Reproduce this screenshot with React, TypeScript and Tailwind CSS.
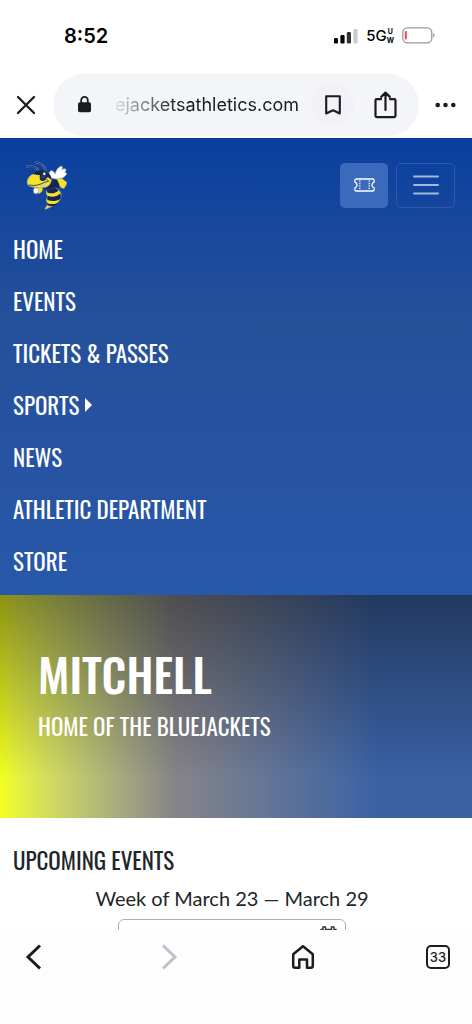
const display = "font-['Oswald','Roboto_Condensed','Roboto',sans-serif]";

const links = ['Home', 'Events', 'Tickets & Passes', 'Sports', 'News', 'Athletic Department', 'Store'];

function StatusBar() {
  return (
    <div className="flex h-[71px] shrink-0 items-center justify-between pr-9 pl-16 font-['Inter',sans-serif] text-black">
      <span className="text-[20px] leading-6 font-semibold">8:52</span>
      <div className="flex items-center gap-2">
        <svg width="24" height="16" viewBox="0 0 24 16" aria-label="Signal">
          <rect x="0" y="10" width="4" height="5.5" rx="1.3" />
          <rect x="6.4" y="7" width="4.2" height="8.5" rx="1.3" />
          <rect x="12.8" y="4" width="4.2" height="11.5" rx="1.3" fill="#333" />
          <rect x="19.4" y="1" width="4.2" height="14.5" rx="1.3" fill="#ccc" />
        </svg>
        <span className="flex items-center font-medium">
          <span className="text-[15px] leading-5">5G</span>
          <span className="flex flex-col text-center text-[7px] leading-[9px] font-bold">
            <span>U</span>
            <span>W</span>
          </span>
        </span>
        <svg width="34" height="17" viewBox="0 0 34 17" fill="none" aria-label="Battery low">
          <rect x="0.8" y="0.8" width="29" height="15" rx="4.6" stroke="#999" strokeWidth="1.3" />
          <path d="M31.3 6v4.6c1.6-.8 1.6-3.8 0-4.6Z" fill="#888" />
          <rect x="2.8" y="4" width="2" height="8.6" rx="0.8" fill="#f0444c" />
        </svg>
      </div>
    </div>
  );
}

function BrowserBar() {
  return (
    <div className="flex h-[67px] shrink-0 items-center text-[#1b1c1f]">
      <button aria-label="Close" className="flex w-[53px] justify-center pr-0.5">
        <svg width="20" height="20" viewBox="0 0 20 20" fill="none" stroke="currentColor" strokeWidth="2.3" strokeLinecap="round">
          <path d="M2 2l16 16M18 2L2 18" />
        </svg>
      </button>
      <div className="flex h-[62px] min-w-0 flex-1 items-center rounded-full bg-[#f4f5f8] pr-[22px] pl-[25px]">
        <svg width="13" height="17" viewBox="0 0 13 17" fill="none" className="shrink-0" aria-label="Secure">
          <rect x="0" y="6.2" width="13" height="10" rx="1.8" fill="currentColor" />
          <path d="M3.2 7V4.2a3.3 3.3 0 0 1 6.6 0V7" stroke="currentColor" strokeWidth="1.8" />
        </svg>
        <span className="min-w-0 flex-1 bg-linear-to-r from-[#e6e7ea] from-10% to-[#1b1c1f] to-40% bg-clip-text pr-3 text-right font-['Inter',sans-serif] text-[18px] leading-7 text-transparent">
          ejacketsathletics.com
        </span>
        <button aria-label="Bookmark" className="flex size-[43px] shrink-0 items-center justify-center rounded-full bg-[#f2f1f8]">
          <svg width="16" height="20" viewBox="0 0 16 20" fill="none" stroke="currentColor" strokeWidth="2.1" strokeLinejoin="round">
            <path d="M1.2 1.2h13.6v17.3L8 15.3l-6.800 3.200Z" />
          </svg>
        </button>
        <button aria-label="Share" className="ml-5 flex shrink-0">
          <svg width="23" height="28" viewBox="0 0 23 28" fill="none" stroke="currentColor" strokeWidth="2.2" strokeLinecap="round" strokeLinejoin="round">
            <path d="M7 8.2H2.8a1.3 1.3 0 0 0-1.3 1.3v15.3a1.3 1.3 0 0 0 1.3 1.3h17.4a1.3 1.3 0 0 0 1.3-1.3V9.5a1.3 1.3 0 0 0-1.3-1.3H16M11.5 19V1.8M7.2 5.900l4.3-4.3 4.3 4.3" />
          </svg>
        </button>
      </div>
      <button aria-label="More" className="flex w-[53px] justify-center">
        <svg width="21" height="6" viewBox="0 0 21 6" fill="currentColor">
          <circle cx="2.7" cy="3" r="2.3" />
          <circle cx="10.5" cy="3" r="2.3" />
          <circle cx="18.3" cy="3" r="2.3" />
        </svg>
      </button>
    </div>
  );
}

function Hornet() {
  return (
    <svg width="45" height="50" viewBox="0 0 45 50" strokeLinejoin="round" aria-label="Mitchell Bluejackets">
      <g fill="none" stroke="#6f86bd" strokeWidth="2" strokeLinecap="round">
        <path d="M2 6.500c4-1.500 9 .5 12.500 5" />
        <path d="M11 2.500c4 0 7.500 2.500 9.500 7" />
      </g>
      <g fill="none" stroke="#172650" strokeWidth="1" strokeLinecap="round">
        <path d="M2 6.500c4-1.500 9 .5 12.500 5" />
        <path d="M11 2.500c4 0 7.500 2.500 9.500 7" />
      </g>
      <path d="M26 18c-2-2-2.500-5.500-.8-6.800 2-1.200 3.800.4 5 2.800.6-3 2.800-7 5.800-7.800 2-.2 1.600 1.800.8 3.300 2-1 4.200-1 4.200.6 0 1-.8 1.700-1.300 2.300 1.800-.2 2.500 1.200 1.300 2.700-2.200 2.600-5 4.200-8.500 4.200Z" fill="#fff" stroke="#a7adba" strokeWidth="0.600" />
      <path d="M31 20l5-2.200 3 2.200 3 2.500-1 3-2 3-3-.8-2-3.200-3-1.500Z" fill="#f5e22a" stroke="#8c9096" strokeWidth="0.600" />
      <path d="M21 23l5-3.500 6 .3 2.200 4.200-1 4-8 4-4-3-6 .5-1-3Z" fill="#172650" />
      <path d="M21.500 30.500l9.500-2.500c3.500 2 5.300 4.800 5 8-.4 4.500-4 7.800-8 9.800l-7.300 3.400c-.8.200-.8-.5-.3-1.200 1.600-2 2.300-3.800 2.300-5-1.700-1.500-1.700-4.500.3-6.500-1.500-1.500-2-4-1.500-6Z" fill="#f5e22a" stroke="#9ba2ac" strokeWidth="0.900" />
      <path d="M21.500 30l9-2.300 3 2.500c-2.500 3.200-7.500 4-11 2.300ZM23 36c4.300 1.600 9 .8 12-2.500.9 1.800 1.100 3.500.7 5.200-3.800 2.500-9 3-13.200 1.300-.5-1.500-.3-2.800.5-4ZM22.500 43.200c3.800 1.300 7.700 1.100 11.300-.7-1.500 1.800-3.300 2.800-5.300 3.800-2.500.2-4.700-.2-6.500-1.200Z" fill="#172650" />
      <path d="M12.500 27.500c1.500-1.200 4-1 5 .8.500 2.200-1 4.700-3.500 5.200-2 .2-3-1-3-2.700Z" fill="#f5e22a" stroke="#8c9096" strokeWidth="0.600" />
      <path d="M9 28.500c1.800-1.500 4.200-.2 4.400 1.800.1 2-1.200 3.700-3 3.500-2-.2-2.600-3.200-1.400-5.300Z" fill="#fff" stroke="#7d8593" strokeWidth="0.500" />
      <path d="M7.500 14.500c3-3.500 7.500-5 12-3.200 4.500 1.700 7.300 5.200 6.800 9.200-.8 4.500-4 7.200-8.800 7-5 .6-8.500 0-13-1.500C2 25 1.800 22 2.800 19.500c.9-2.300 2.600-4.200 4.700-5Z" fill="#f5e22a" stroke="#a7adba" strokeWidth="0.800" />
      <path d="M7.500 14C11 10 16.500 8.800 21 11.500c4 2.200 6 5.500 5.500 9.200-1.200-2.200-2.600-3.200-4.300-3.500-1.200 3-3.400 4.200-5.700 3.500-2-.6-2.200-3-1.500-5.400-2.500-.6-5-.7-7.500-1.300Z" fill="#172650" />
      <ellipse cx="18.500" cy="15.800" rx="2.600" ry="3.300" fill="#21397a" transform="rotate(25 18.500 15.800)" />
      <path d="M18.500 12.200l2.400 1.100-1.200 2-1.600-.7Z" fill="#fff" />
      <path d="M4 25c4.500 1 8 .3 11-.7 3-1 5.500-2.600 7.500-3M22 19.500l1.800 2" fill="none" stroke="#172650" strokeWidth="0.800" strokeLinecap="round" />
      <path d="M15.500 24.800c2.500-.6 4.800-1.800 6.500-2.800l-1.500 2.200-3.800 1.600Z" fill="#fff" stroke="#56606f" strokeWidth="0.300" />
    </svg>
  );
}

function SiteHeader() {
  return (
    <header className="shrink-0 bg-linear-to-b from-[#083f9f] via-[#25509a] via-40% to-[#2858aa] pb-2 text-white">
      <div className="flex h-[85px] items-center pt-[9px] pr-[17px] pl-[25px]">
        <a href="#home" className="mr-auto"><Hornet /></a>
        <a href="#tickets" aria-label="Buy tickets" className="mr-2 flex h-[45px] w-12 items-center justify-center rounded-[5px] bg-[#3b6abd]">
          <svg width="21" height="14" viewBox="0 0 21 14" fill="none" stroke="#fff" strokeWidth="1.300" strokeLinejoin="round">
            <path d="M2.200 1h16.600a1.300 1.300 0 0 1 1.300 1.300v1.900a2.900 2.900 0 0 0 0 5.600v1.900a1.300 1.300 0 0 1-1.300 1.300H2.200a1.300 1.300 0 0 1-1.300-1.300V9.800a2.900 2.900 0 0 0 0-5.600V2.300A1.300 1.300 0 0 1 2.200 1Z" />
            <path d="M5.800 2.500v9M15.200 2.500v9" strokeDasharray="1.300 1.100" />
          </svg>
        </a>
        <button aria-label="Toggle navigation" className="flex h-[45px] w-[59px] items-center justify-center rounded-[5px] border border-[#2d59ad]">
          <svg width="26" height="20" viewBox="0 0 26 20" stroke="#a3b8e2" strokeWidth="2" strokeLinecap="round">
            <path d="M1 1.500h24M1 10h24M1 18.500h24" />
          </svg>
        </button>
      </div>
      <nav>
        <ul>
          {links.map((label) => (
            <li key={label} className="flex h-[52px] items-center px-[13px]">
              <a href="#nav" className={`${display} flex items-center gap-1.5 text-[23px] leading-8 uppercase`}>
                {label}
                {label === 'Sports' && (
                  <svg width="7" height="14" viewBox="0 0 7 14" fill="currentColor">
                    <path d="M0 0l7 7-7 7Z" />
                  </svg>
                )}
              </a>
            </li>
          ))}
        </ul>
      </nav>
    </header>
  );
}

function BottomBar() {
  return (
    <nav aria-label="Browser" className="flex h-[94px] shrink-0 items-start justify-between bg-[#fdfdfd] px-5 pt-[13px] text-[#1b1c1f]">
      <button aria-label="Back" className="flex size-7 items-center justify-center">
        <svg width="18" height="26" viewBox="0 0 18 26" fill="none" stroke="currentColor" strokeWidth="3">
          <path d="M15 1.500L3 13l12 11.500" />
        </svg>
      </button>
      <button aria-label="Forward" className="flex size-7 items-center justify-center text-[#bfc1c9]">
        <svg width="18" height="26" viewBox="0 0 18 26" fill="none" stroke="currentColor" strokeWidth="3">
          <path d="M3 1.500L15 13 3 24.500" />
        </svg>
      </button>
      <button aria-label="Home page" className="flex size-7 items-center justify-center">
        <svg width="24" height="26" viewBox="0 0 24 26" fill="none" stroke="currentColor" strokeWidth="2.500" strokeLinejoin="round">
          <path d="M2.200 10.200L12 2.200l9.800 8v11.600a2 2 0 0 1-2 2H16v-8.300H8.300v8.300H4.200a2 2 0 0 1-2-2Z" />
        </svg>
      </button>
      <button aria-label="Open tabs" className="flex size-7 items-center justify-center">
        <span className="flex size-6 items-center justify-center rounded-[5px] border-2 border-current font-['Inter',sans-serif] text-[13px] leading-4 font-medium">
          33
        </span>
      </button>
    </nav>
  );
}

export default function App() {
  return (
    <div className="flex h-screen flex-col overflow-hidden bg-white">
      <StatusBar />
      <BrowserBar />
      <main className="flex min-h-0 flex-1 flex-col overflow-hidden">
        <SiteHeader />
        <section className="shrink-0 bg-linear-to-r from-[#f2ff18] via-[#868488] via-37% to-[#3a61a4] to-80% text-white">
          <div className="flex h-[223px] flex-col justify-center bg-linear-to-b from-black/42 to-transparent to-82% pr-4 pb-7 pl-[38px]">
            <h1 className={`${display} text-[46px] leading-[66px] font-medium uppercase`}>Mitchell</h1>
            <p className={`${display} text-[23px] leading-10 uppercase`}>Home of the Bluejackets</p>
          </div>
        </section>
        <section className="shrink-0 pt-[22px] pr-[21px] pl-[13px] text-[#212529]">
          <h2 className={`${display} text-[23px] leading-10 uppercase`}>Upcoming Events</h2>
          <p className="text-center font-['Lato',sans-serif] text-[20px] leading-9">Week of March 23 — March 29</p>
          <div className="mx-auto mt-[3px] flex h-11 w-[228px] items-start rounded-md border border-[#adb0b5] pt-1.5 pr-2">
            <input aria-label="Week" readOnly className="min-w-0 flex-1 outline-none" />
            <svg width="17" height="18" viewBox="0 0 17 18" fill="none" stroke="#333" strokeWidth="1.400">
              <path d="M1 7.500h15M1 3.500h2V1h2.500v2.500h6V1H14v2.500h2V17H1Z" />
            </svg>
          </div>
        </section>
      </main>
      <BottomBar />
    </div>
  );
}
